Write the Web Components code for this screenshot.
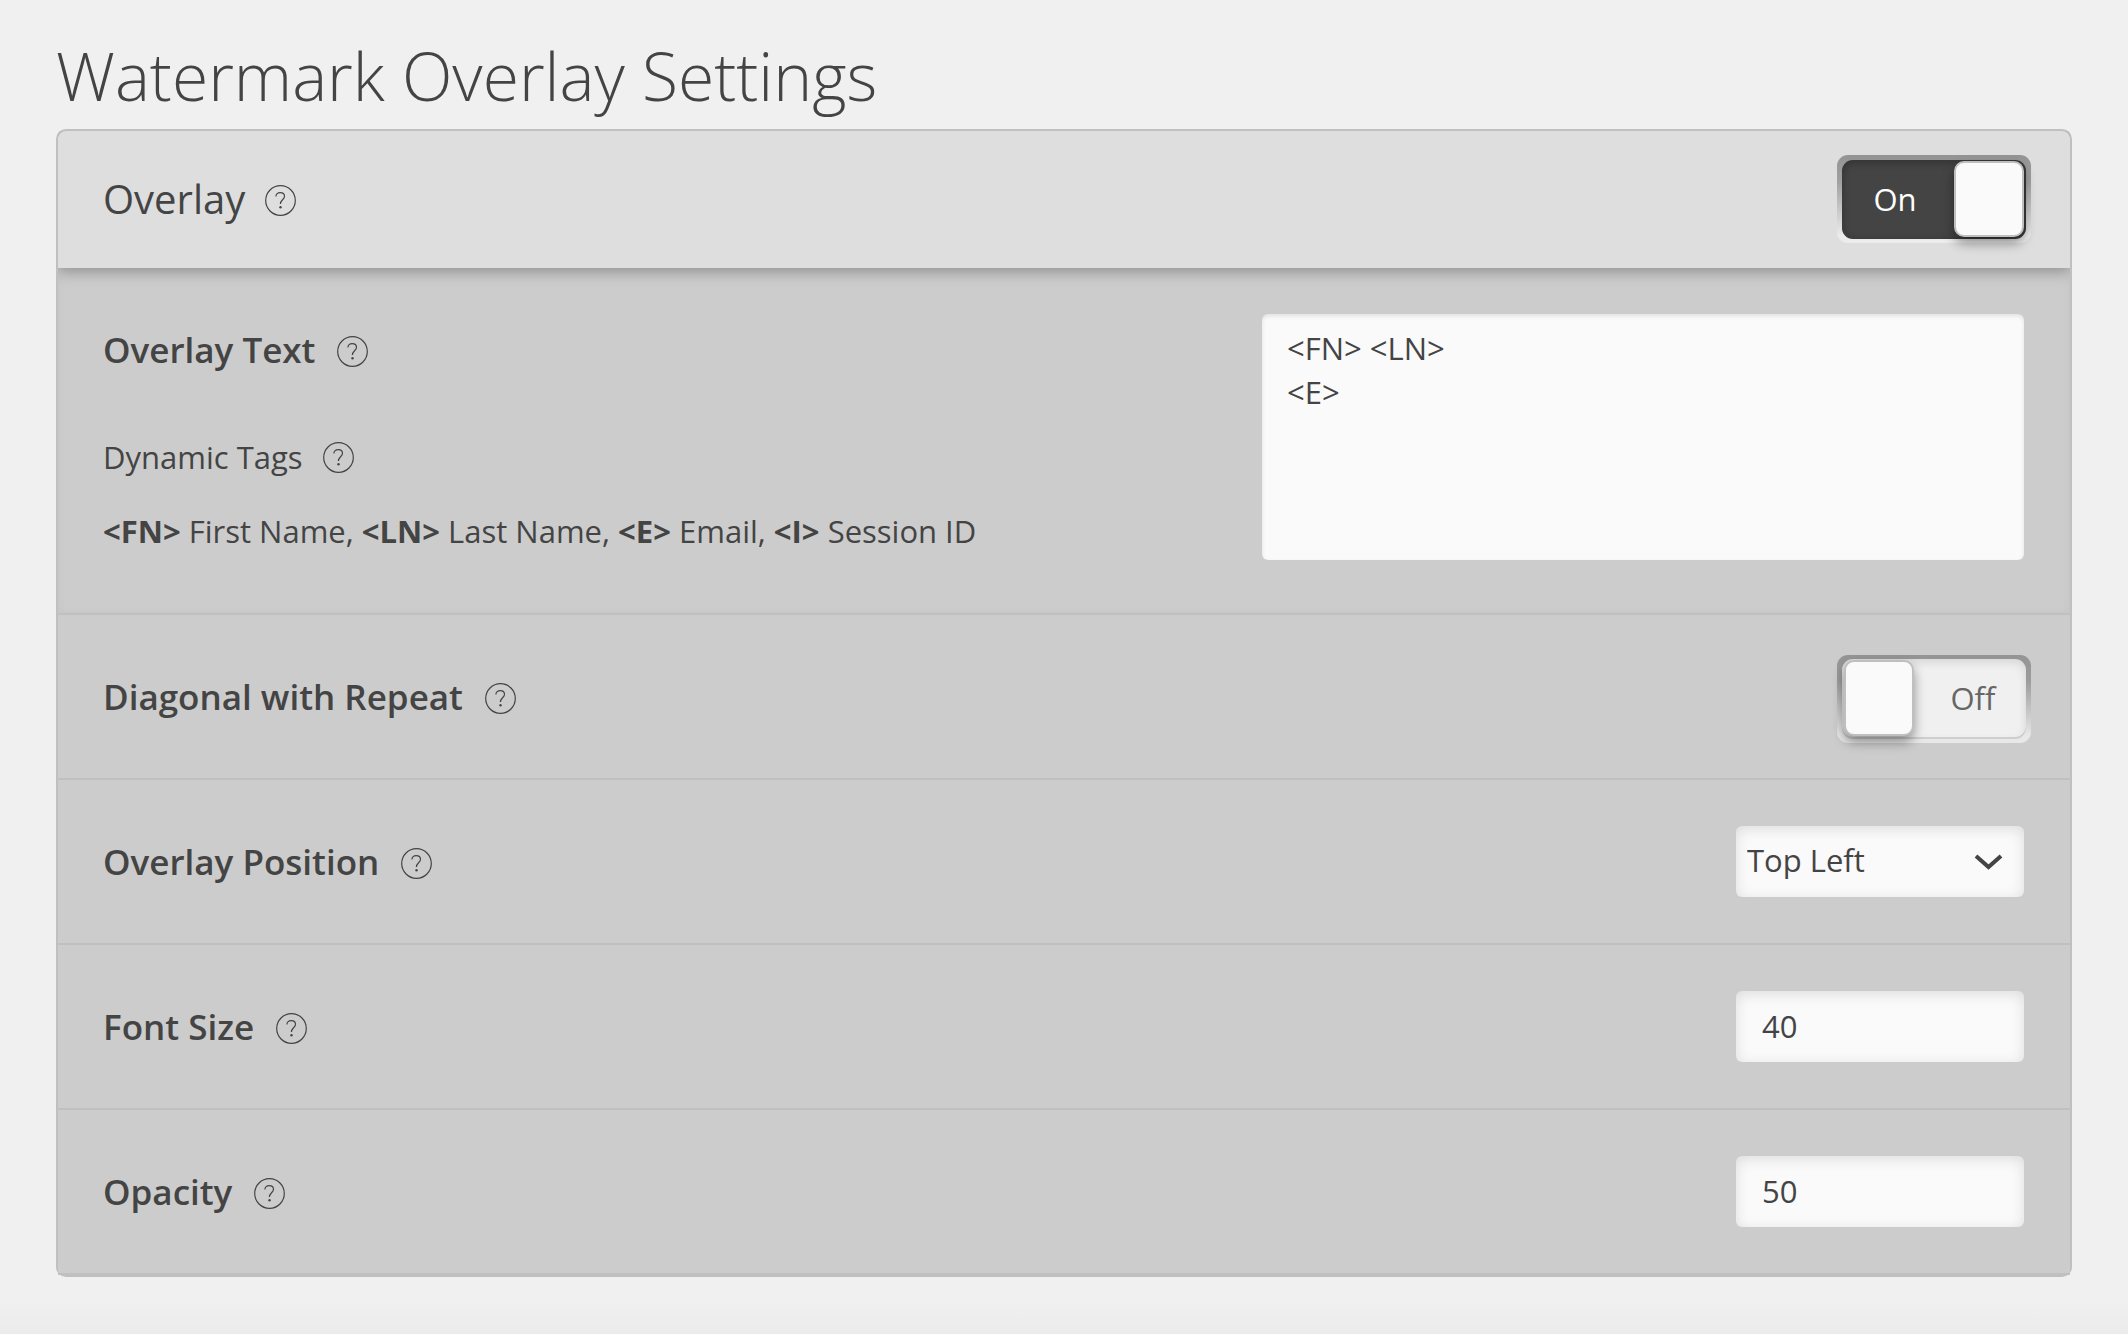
<!DOCTYPE html>
<html lang="en">
<head>
<meta charset="utf-8">
<meta name="viewport" content="width=device-width, initial-scale=1">
<title>Watermark Overlay Settings</title>
<style>
  body {
    margin: 0;
    background-color: #f0f0f0;
    color: #444;
    font-family: "Open Sans", "Noto Sans", sans-serif;
    font-size: 31px;
    line-height: 44px;
  }
</style>
</head>
<body>
<settings-page heading="Watermark Overlay Settings">
  <toggle-row class="header" label="Overlay" checked></toggle-row>
  <textarea-row label="Overlay Text" value="&lt;FN&gt; &lt;LN&gt;&#10;&lt;E&gt;">
    <tag-list>
      <b>&lt;FN&gt;</b> First Name, <b>&lt;LN&gt;</b> Last Name, <b>&lt;E&gt;</b> Email, <b>&lt;I&gt;</b> Session ID
    </tag-list>
  </textarea-row>
  <toggle-row label="Diagonal with Repeat"></toggle-row>
  <select-row label="Overlay Position" options="Top Left,Top Right,Center,Bottom Left,Bottom Right"></select-row>
  <input-row label="Font Size" value="40"></input-row>
  <input-row label="Opacity" value="50"></input-row>
</settings-page>

<script>
const rowStyles = `
  * {
    box-sizing: border-box;
  }
  :host {
    display: flex;
    align-items: center;
    justify-content: space-between;
    gap: 24px;
    padding: 46px 46px 46px 45px;
    background-color: #ccc;
    border-bottom: 2px solid #c0c0c0;
  }
  .title {
    display: flex;
    align-items: center;
    gap: 22px;
    font-size: 35px;
    font-weight: 600;
    line-height: 50px;
  }
  input, textarea, select {
    margin: 0;
    border: none;
    border-radius: 6px;
    background-color: #fafafa;
    color: inherit;
    font: inherit;
  }
  .field {
    height: 71px;
    width: 288px;
    padding: 0 26px 1px;
    box-shadow: inset 0 3px 14px rgba(0, 0, 0, 0.12);
  }
`;

class SettingsPage extends HTMLElement {
  constructor() {
    super();
    this.attachShadow({ mode: 'open' });
    this.shadowRoot.innerHTML = `
      <style>
        :host {
          display: block;
          box-sizing: border-box;
          min-height: 100vh;
          padding: 30px 56px;
          background: linear-gradient(to top, #ebebeb, #f0f0f0 34px);
        }
        h1 {
          margin: 0 0 9px;
          font-size: 66px;
          font-weight: 300;
          line-height: 90px;
        }
        .panel {
          border: 2px solid #c0c0c0;
          border-radius: 10px;
          background-color: #c0c0c0;
        }
      </style>
      <h1></h1>
      <div class="panel"><slot></slot></div>
    `;
    this.shadowRoot.querySelector('h1').textContent = this.getAttribute('heading');
  }
}

class HelpButton extends HTMLElement {
  constructor() {
    super();
    this.attachShadow({ mode: 'open' });
    this.shadowRoot.innerHTML = `
      <style>
        :host {
          display: flex;
          padding-top: 3px;
        }
        button {
          display: flex;
          padding: 0;
          border: none;
          background: none;
          color: inherit;
          cursor: pointer;
        }
      </style>
      <button type="button" aria-label="Help">
        <svg width="31" height="31" viewBox="0 0 31 31" fill="none" stroke="currentColor" stroke-width="1.2">
          <circle cx="15.5" cy="15.5" r="14.8"/>
          <path d="M10.9 11.6C10.9 9 12.7 7.6 15.2 7.6C17.8 7.6 19.5 9 19.5 11.3C19.5 14.6 15.4 15.1 15.4 19"/>
          <circle cx="15.5" cy="22.3" r="1.2" fill="currentColor" stroke="none"/>
        </svg>
      </button>
    `;
  }
}

class TagList extends HTMLElement {
  constructor() {
    super();
    this.attachShadow({ mode: 'open' });
    this.shadowRoot.innerHTML = `
      <style>
        :host {
          display: flex;
          flex-direction: column;
          gap: 30px;
        }
        .title {
          display: flex;
          align-items: center;
          gap: 20px;
        }
        help-button {
          padding: 0;
        }
        p {
          margin: 0;
        }
      </style>
      <div class="title"><span>Dynamic Tags</span><help-button></help-button></div>
      <p><slot></slot></p>
    `;
  }
}

class ToggleRow extends HTMLElement {
  constructor() {
    super();
    this.attachShadow({ mode: 'open' });
    this.shadowRoot.innerHTML = `
      <style>
        ${rowStyles}
        :host {
          padding: 40px 39px 35px 45px;
        }
        :host(.header) {
          position: relative;
          padding: 24px 39px 25px 45px;
          border: none;
          border-radius: 8px 8px 0 0;
          background-color: #dedede;
          box-shadow: 0 5px 14px rgba(0, 0, 0, 0.25);
          clip-path: inset(0 0 -24px);
        }
        .title {
          padding-bottom: 5px;
        }
        :host(.header) .title {
          gap: 20px;
          padding: 0;
          font-size: 40px;
          font-weight: 400;
        }
        .switch {
          display: flex;
          width: 194px;
          height: 88px;
          padding: 4px 5px;
          border-radius: 11px;
          background: linear-gradient(#949494, #9c9c9c 30%, #e8e8e8 92%);
        }
        .track {
          display: flex;
          align-items: center;
          width: 100%;
          padding: 0 2px 2px;
          border-radius: 11px;
          background-color: #f0f0f0;
          box-shadow: inset 0 3px 10px rgba(0, 0, 0, 0.12), inset 0 -2px 0 #d4d4d4;
          color: #666;
        }
        .state {
          flex: 1;
          padding-left: 8px;
          text-align: center;
        }
        .knob {
          appearance: none;
          width: 70px;
          height: 76px;
          border: 2px solid #bfbfbf;
          border-radius: 10px;
          box-shadow: 0 6px 12px rgba(0, 0, 0, 0.4);
        }
        .on {
          padding-top: 5px;
          background: linear-gradient(#949494, #a0a0a0 30%, #ececec 92%);
        }
        .on .track {
          flex-direction: row-reverse;
          background-color: #444;
          box-shadow: inset 0 2px 8px rgba(0, 0, 0, 0.3);
          color: #fff;
        }
        .on .state {
          padding: 0 8px 0 0;
        }
      </style>
      <div class="title"><label for="control"></label><help-button></help-button></div>
      <div class="switch">
        <div class="track">
          <input class="knob" id="control" type="checkbox" role="switch">
          <span class="state"></span>
        </div>
      </div>
    `;
    this.shadowRoot.querySelector('label').textContent = this.getAttribute('label');
    const input = this.shadowRoot.querySelector('input');
    input.checked = this.hasAttribute('checked');
    input.addEventListener('change', () => this.update());
    this.update();
  }

  update() {
    const on = this.shadowRoot.querySelector('input').checked;
    this.shadowRoot.querySelector('.switch').classList.toggle('on', on);
    this.shadowRoot.querySelector('.state').textContent = on ? 'On' : 'Off';
  }
}

class TextareaRow extends HTMLElement {
  constructor() {
    super();
    this.attachShadow({ mode: 'open' });
    this.shadowRoot.innerHTML = `
      <style>
        ${rowStyles}
        :host {
          align-items: flex-start;
          padding-bottom: 53px;
          box-shadow: inset 0 0 8px rgba(0, 0, 0, 0.04);
        }
        .info {
          display: flex;
          flex-direction: column;
          gap: 60px;
          padding-top: 11px;
        }
        textarea {
          flex: 0 1 762px;
          height: 246px;
          padding: 12px 25px;
          box-shadow: inset 0 2px 4px rgba(0, 0, 0, 0.1);
          resize: none;
        }
      </style>
      <div class="info">
        <div class="title"><label for="control"></label><help-button></help-button></div>
        <slot></slot>
      </div>
      <textarea id="control"></textarea>
    `;
    this.shadowRoot.querySelector('label').textContent = this.getAttribute('label');
    this.shadowRoot.querySelector('textarea').value = this.getAttribute('value');
  }
}

class SelectRow extends HTMLElement {
  constructor() {
    super();
    this.attachShadow({ mode: 'open' });
    this.shadowRoot.innerHTML = `
      <style>
        ${rowStyles}
        .select {
          display: grid;
          align-items: center;
        }
        select, svg {
          grid-area: 1 / 1;
        }
        select {
          appearance: none;
        }
        .field {
          padding: 0 60px 3px 11px;
        }
        svg {
          justify-self: end;
          margin-right: 21px;
          pointer-events: none;
        }
      </style>
      <div class="title"><label for="control"></label><help-button></help-button></div>
      <div class="select">
        <select class="field" id="control"></select>
        <svg width="29" height="18" viewBox="0 0 29 18" fill="none" stroke="currentColor" stroke-width="4">
          <path d="M2 3L14.5 14L27 3"/>
        </svg>
      </div>
    `;
    this.shadowRoot.querySelector('label').textContent = this.getAttribute('label');
    const select = this.shadowRoot.querySelector('select');
    this.getAttribute('options').split(',').forEach((name) => select.add(new Option(name)));
  }
}

class InputRow extends HTMLElement {
  constructor() {
    super();
    this.attachShadow({ mode: 'open' });
    this.shadowRoot.innerHTML = `
      <style>${rowStyles}</style>
      <div class="title"><label for="control"></label><help-button></help-button></div>
      <input class="field" id="control" type="text" inputmode="numeric">
    `;
    this.shadowRoot.querySelector('label').textContent = this.getAttribute('label');
    this.shadowRoot.querySelector('input').value = this.getAttribute('value');
  }
}

customElements.define('settings-page', SettingsPage);
customElements.define('help-button', HelpButton);
customElements.define('tag-list', TagList);
customElements.define('toggle-row', ToggleRow);
customElements.define('textarea-row', TextareaRow);
customElements.define('select-row', SelectRow);
customElements.define('input-row', InputRow);
</script>
</body>
</html>
